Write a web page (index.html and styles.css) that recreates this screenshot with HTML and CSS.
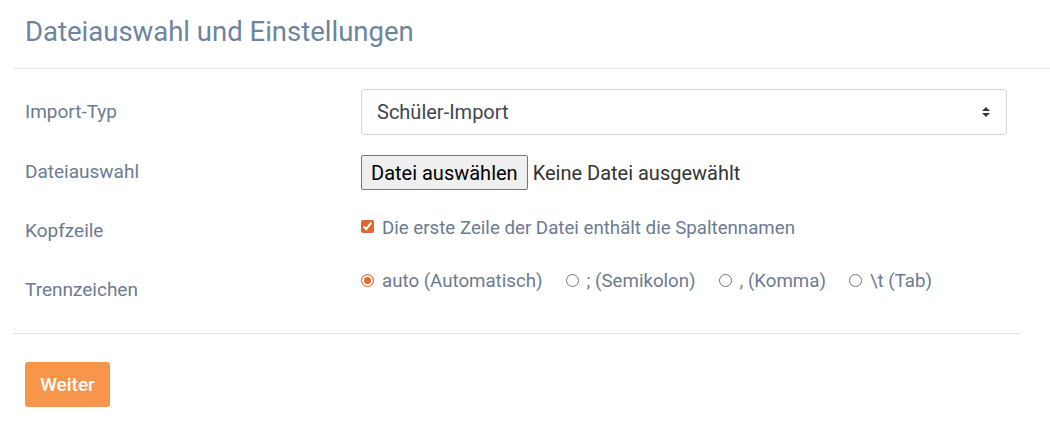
FILE: index.html
```html
<!DOCTYPE html>
<html lang="de">
<head>
<meta charset="utf-8">
<title>Dateiauswahl und Einstellungen</title>
<link rel="stylesheet" href="styles.css">
</head>
<body>
<div class="card">
  <div class="card-header">
    <h1 class="title">Dateiauswahl und Einstellungen</h1>
  </div>
  <div class="card-body">
    <div class="form-grid">
      <div class="label l1">Import-Typ</div>
      <div class="ctrl">
        <div class="select">
          <span>Schüler-Import</span>
          <svg class="arrows" width="10" height="12" viewBox="0 0 10 12"><path d="M1 5 L5 1 L9 5 Z M1 7 L5 11 L9 7 Z" fill="#343a40"/></svg>
        </div>
      </div>

      <div class="label l2">Dateiauswahl</div>
      <div class="ctrl file-row">
        <button class="file-btn" type="button">Datei auswählen</button>
        <span class="file-name">Keine Datei ausgewählt</span>
      </div>

      <div class="label l3">Kopfzeile</div>
      <div class="ctrl check-row">
        <label class="opt"><input type="checkbox" checked><span>Die erste Zeile der Datei enthält die Spaltennamen</span></label>
      </div>

      <div class="label l4">Trennzeichen</div>
      <div class="ctrl radio-row">
        <label class="opt"><input class="radio" type="radio" name="sep" checked><span>auto (Automatisch)</span></label>
        <label class="opt"><input class="radio" type="radio" name="sep"><span>; (Semikolon)</span></label>
        <label class="opt"><input class="radio" type="radio" name="sep"><span>, (Komma)</span></label>
        <label class="opt"><input class="radio" type="radio" name="sep"><span>\t (Tab)</span></label>
      </div>
    </div>
    <div class="divider"></div>
    <button class="btn-next" type="button">Weiter</button>
  </div>
</div>
</body>
</html>
```
FILE: styles.css
```css
html, body {
  margin: 0;
  padding: 0;
  background: #ffffff;
}
body {
  font-family: Roboto, "Liberation Sans", Arial, sans-serif;
  color: #6c7b91;
}
.card {
  margin-left: 13px;
}
.card-header {
  border-bottom: 1px solid #e3e3e3;
  padding: 16px 12px 20px;
}
.title {
  margin: 0;
  font-size: 27.5px;
  line-height: 32px;
  font-weight: 400;
  color: #6c84a0;
}
.card-body {
  width: 1008px;
  padding-top: 20px;
}
.form-grid {
  display: grid;
  grid-template-columns: 336px 646px;
  padding-left: 12px;
  row-gap: 20px;
}
.label {
  font-size: 19px;
  line-height: 24px;
  color: #6c7b91;
}
.l1 { padding-top: 11px; }
.l2 { padding-top: 5px; }
.l3 { padding-top: 3px; margin-top: 6px; }
.l4 { padding-top: 9px; margin-top: 6px; }
.ctrl { display: flex; align-items: center; }
.select {
  box-sizing: border-box;
  width: 646px;
  height: 46px;
  border: 1px solid #d4d7db;
  border-radius: 4px;
  display: flex;
  align-items: center;
  justify-content: space-between;
  padding: 0 15px 0 15px;
  font-size: 20px;
  color: #3f4650;
}
.arrows { display: block; }
.file-row { height: 35px; }
.file-btn {
  box-sizing: border-box;
  height: 35px;
  padding: 0 9px;
  font-family: Roboto, "Liberation Sans", Arial, sans-serif;
  font-size: 20px;
  color: #000;
  background: #efefef;
  border: 1px solid #767676;
  border-radius: 2px;
}
.file-name {
  margin-left: 5px;
  font-size: 20px;
  color: #333;
}
.check-row { height: 24px; margin-top: 6px; }
.radio-row { height: 24px; margin-top: 6px; gap: 23px; }
.opt {
  display: flex;
  align-items: center;
  font-size: 18.7px;
  line-height: 24px;
  color: #6c7b91;
}
.opt input {
  margin: 0 8px 0 0;
  width: 13px;
  height: 13px;
  accent-color: #e0662b;
}
.check-row .opt input { position: relative; top: -2px; }
.radio-row .opt input.radio {
  position: relative;
  top: -1px;
  appearance: none;
  -webkit-appearance: none;
  box-sizing: border-box;
  width: 13px;
  height: 13px;
  border: 1px solid #767676;
  border-radius: 50%;
  background: #fff;
}
.radio-row .opt input.radio:checked {
  border: 1.5px solid #e8692c;
  background: #e8692c;
  box-shadow: inset 0 0 0 2px #fff;
}
.divider {
  height: 1px;
  background: #e3e3e3;
  margin-top: 31px;
}
.btn-next {
  margin: 28px 0 0 12px;
  width: 85px;
  height: 45px;
  border: none;
  border-radius: 3px;
  background: #f7954a;
  color: #fff;
  font-family: Roboto, "Liberation Sans", Arial, sans-serif;
  font-size: 19px;
  font-weight: 500;
}
```
